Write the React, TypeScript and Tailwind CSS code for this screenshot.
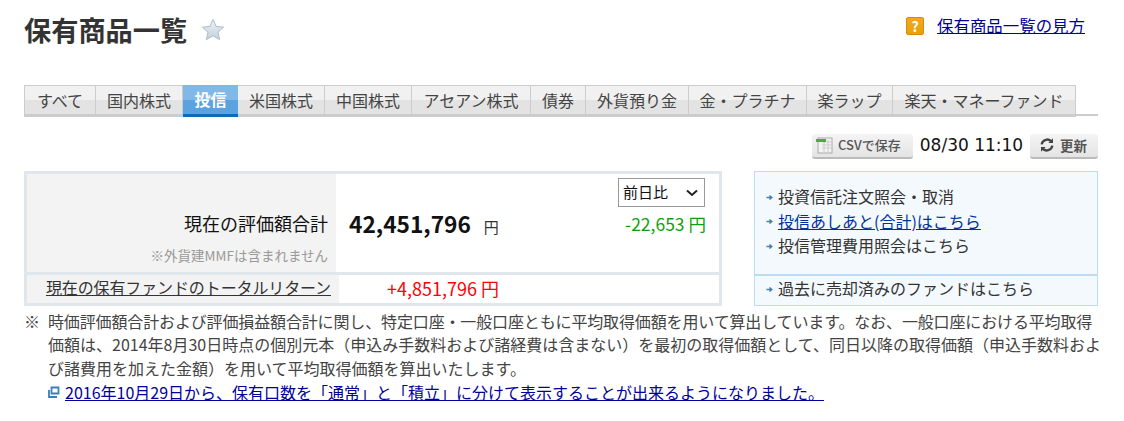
const tabs: [string, number, boolean?][] = [
  ["すべて", 72],
  ["国内株式", 87],
  ["投信", 55, true],
  ["米国株式", 87],
  ["中国株式", 87],
  ["アセアン株式", 119],
  ["債券", 55],
  ["外貨預り金", 103],
  ["金・プラチナ", 118],
  ["楽ラップ", 86],
  ["楽天・マネーファンド", 183],
];

const font = { fontFamily: '"Noto Sans CJK JP", "Noto Sans", sans-serif' };

function Arrow() {
  return (
    <svg width="7" height="7" viewBox="0 0 7 7" className="shrink-0 mr-[5px] mt-[2px]">
      <path d="M0.5 3.5H5M3.5 1.5L5.8 3.5L3.5 5.5" fill="none" stroke="#4a7fa8" strokeWidth="1.5" />
    </svg>
  );
}

export default function App() {
  return (
    <div className="w-[1124px] h-[421px] bg-white overflow-hidden pl-[24px] text-[16px] text-[#333]" style={font}>
      <div className="w-[1074px]">
        <div className="flex items-start justify-between h-[85px]">
          <div className="flex items-center pt-[10px]">
            <h1 className="text-[27.2px] leading-[38px] font-bold text-[#333]">保有商品一覧</h1>
            <svg width="24" height="24" viewBox="0 0 24 24" className="ml-[14px] mt-[1px]">
              <defs>
                <linearGradient id="st" x1="0" y1="0" x2="0" y2="1">
                  <stop offset="0" stopColor="#eef3f7" />
                  <stop offset="1" stopColor="#c3d0dc" />
                </linearGradient>
              </defs>
              <path d="M12 1.5L15.1 8.4L22.6 9.2L17 14.2L18.6 21.6L12 17.8L5.4 21.6L7 14.2L1.4 9.2L8.9 8.4Z" fill="url(#st)" stroke="#aebbc6" strokeWidth="1" />
            </svg>
          </div>
          <div className="flex items-center pt-[16px] pr-[13px]">
            <span className="w-[18px] h-[18px] rounded-[2px] bg-gradient-to-b from-[#f5a623] to-[#e8a200] border border-[#d98c0a] text-white text-[14px] leading-[16px] font-bold text-center mr-[13px]">?</span>
            <a className="text-[16.45px] leading-[22px] underline text-[#000099] -mt-[2px]">保有商品一覧の見方</a>
          </div>
        </div>

        <div className="flex border-b-[2px] border-[#cccccc] h-[31px]">
          {tabs.map(([t, w, active]) =>
            active ? (
              <div key={t} style={{ width: w }} className="h-[32px] shrink-0 border-b-[3px] border-[#0e6ab8] bg-gradient-to-b from-[#80b8e8] from-50% to-[#5ba2e0] to-50% text-white font-bold text-center leading-[28px]">
                {t}
              </div>
            ) : (
              <div key={t} style={{ width: w }} className="h-[32px] shrink-0 border-t border-r border-b-[3px] border-t-[#cccccc] border-r-[#cccccc] border-b-[#cccccc] first:border-l first:border-l-[#cccccc] bg-gradient-to-b from-[#f1f1f1] from-50% to-[#e3e3e3] to-50% text-[#444] text-center leading-[28px]">
                {t}
              </div>
            )
          )}
        </div>

        <div className="flex justify-end items-center h-[30px] mt-[15px]">
          <div className="w-[101px] h-[25px] rounded-[3px] bg-gradient-to-b from-[#f4f4f4] to-[#e4e4e4] border-b-2 border-[#bbb] flex items-center pl-[4px] text-[13px] text-[#555] font-medium">
            <svg width="17" height="17" viewBox="0 0 17 17" className="shrink-0 mr-[5px]">
              <rect x="2" y="1" width="14" height="15" fill="#f2f2f2" stroke="#aaa" />
              <path d="M6 5h9M6 8h9M6 11h9M8 3v12M12 3v12" stroke="#ccc" strokeWidth="1" />
              <rect x="0" y="2" width="10" height="3" fill="#44b035" />
            </svg>
            CSVで保存
          </div>
          <div className="w-[117px] text-center text-[#111] text-[17px] leading-[22px] -mt-[3px]" style={{ fontFamily: '"DejaVu Sans", sans-serif' }}>08/30 11:10</div>
          <div className="w-[68px] h-[25px] rounded-[3px] bg-gradient-to-b from-[#f4f4f4] to-[#e4e4e4] border-b-2 border-[#bbb] flex items-center pl-[9px] text-[13.5px] text-[#555] font-bold">
            <svg width="16" height="16" viewBox="0 0 24 24" className="shrink-0 mr-[5px]" fill="none" stroke="#444" strokeWidth="3.5">
              <path d="M4 11A8.5 8.5 0 0 1 19 7M20 13A8.5 8.5 0 0 1 5 17" />
              <path d="M21 2v7h-7M3 22v-7h7" fill="#444" stroke="none" />
            </svg>
            更新
          </div>
        </div>

        <div className="flex justify-between mt-[10px]">
          <div className="w-[698px] h-[135px] border-[3px] border-[#dfe6ec] flex flex-col">
            <div className="flex h-[101px] border-b-[3px] border-[#dfe6ec]">
              <div className="w-[309px] bg-[#f3f3f3] flex flex-col items-end pr-[8px] pt-[34px] shrink-0">
                <div className="text-[18px] text-[#111] leading-[30px]">現在の評価額合計</div>
                <div className="text-[13.5px] text-[#999] leading-[20px] mt-[7px]">※外貨建MMFは含まれません</div>
              </div>
              <div className="flex-1 relative pl-[13px] pt-[33px] flex">
                <span className="text-[22.7px] font-bold text-[#111] leading-[34px]">42,451,796</span>
                <span className="ml-[13px] text-[#333] text-[15px] leading-[40px]">円</span>
                <div className="flex-1 flex flex-col items-end pr-[13px] -mt-[29px]">
                  <div className="w-[87px] h-[29px] border border-[#999] text-[#111] text-[15px] flex items-center justify-between pl-[4px] pr-[5px] mr-[1px]">
                    前日比
                    <svg width="14" height="14" viewBox="0 0 14 14"><path d="M2 4.5L7 9L12 4.5" fill="none" stroke="#222" strokeWidth="2" /></svg>
                  </div>
                  <div className="text-[#109f10] text-[17.5px] leading-[28px] mt-[3px]">-22,653 円</div>
                </div>
              </div>
            </div>
            <div className="flex h-[28px]">
              <div className="w-[312px] bg-[#f3f3f3] pr-[8px] text-right leading-[25px] underline text-[#333] shrink-0 tracking-[-0.12px]">現在の保有ファンドのトータルリターン</div>
              <div className="pl-[48px] text-[#ff0000] text-[18px] leading-[26px]">+4,851,796 円</div>
            </div>
          </div>

          <div className="w-[344px] h-[135px] border border-[#bcdcf4] bg-[#f4f9fd] flex flex-col">
            <div className="h-[104px] border-b-2 border-[#bcdcf4] pt-[12px] pl-[11px] leading-[24.5px]">
              <div className="flex items-center"><Arrow />投資信託注文照会・取消</div>
              <div className="flex items-center"><Arrow /><a className="underline text-[#003399]">投信あしあと(合計)はこちら</a></div>
              <div className="flex items-center"><Arrow />投信管理費用照会はこちら</div>
            </div>
            <div className="pl-[11px] leading-[24px] flex items-center"><Arrow />過去に売却済みのファンドはこちら</div>
          </div>
        </div>

        <div className="flex mt-[4px] leading-[23.4px] whitespace-nowrap text-[#444]">
          <span className="w-[24px] shrink-0">※</span>
          <div>
            <span className="tracking-[-0.14px]">時価評価額合計および評価損益額合計に関し、特定口座・一般口座ともに平均取得価額を用いて算出しています。なお、一般口座における平均取得</span><br />
            価額は、2014年8月30日時点の個別元本（申込み手数料および諸経費は含まない）を最初の取得価額として、同日以降の取得価額（申込手数料およ<br />
            び諸費用を加えた金額）を用いて平均取得価額を算出いたします。<br />
            <span className="inline-flex items-center">
              <svg width="12" height="12" viewBox="0 0 12 12" className="mr-[5px]">
                <path d="M3.5 1.5h7v6h-7z" fill="none" stroke="#3a7fc0" strokeWidth="1.8" />
                <path d="M1 4v7h8" fill="none" stroke="#3a7fc0" strokeWidth="1.8" />
              </svg>
              <a className="underline text-[#000099]">2016年10月29日から、保有口数を「通常」と「積立」に分けて表示することが出来るようになりました。</a>
            </span>
          </div>
        </div>
      </div>
    </div>
  );
}
